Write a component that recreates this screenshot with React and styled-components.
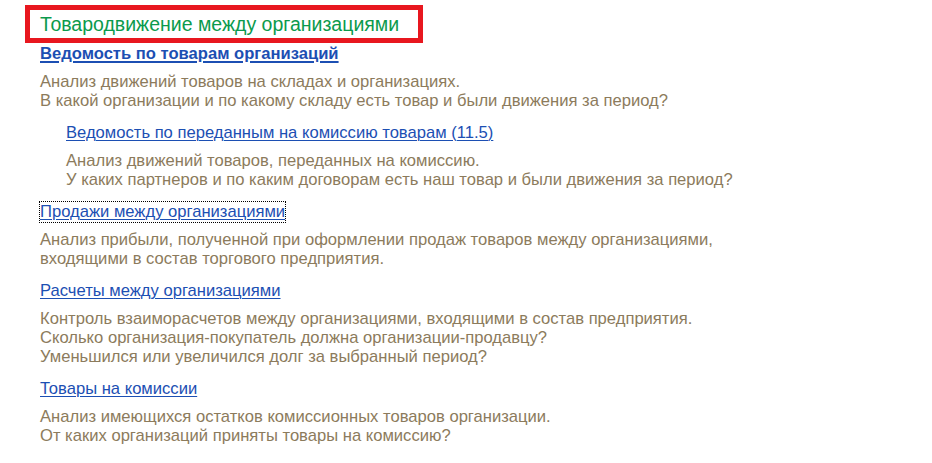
import React from 'react';
import styled, { createGlobalStyle } from 'styled-components';

const GlobalStyle = createGlobalStyle`
  body {
    margin: 0;
    background: #ffffff;
    font-family: Arial, "Liberation Sans", sans-serif;
  }
`;

const sections = [
  {
    title: 'Ведомость по товарам организаций',
    bold: true,
    lines: [
      'Анализ движений товаров на складах и организациях.',
      'В какой организации и по какому складу есть товар и были движения за период?',
    ],
  },
  {
    title: 'Ведомость по переданным на комиссию товарам (11.5)',
    indent: true,
    lines: [
      'Анализ движений товаров, переданных на комиссию.',
      'У каких партнеров и по каким договорам есть наш товар и были движения за период?',
    ],
  },
  {
    title: 'Продажи между организациями',
    focused: true,
    lines: [
      'Анализ прибыли, полученной при оформлении продаж товаров между организациями,',
      'входящими в состав торгового предприятия.',
    ],
  },
  {
    title: 'Расчеты между организациями',
    lines: [
      'Контроль взаиморасчетов между организациями, входящими в состав предприятия.',
      'Сколько организация-покупатель должна организации-продавцу?',
      'Уменьшился или увеличился долг за выбранный период?',
    ],
  },
  {
    title: 'Товары на комиссии',
    lines: [
      'Анализ имеющихся остатков комиссионных товаров организации.',
      'От каких организаций приняты товары на комиссию?',
    ],
  },
];

export default function App() {
  return (
    <Page>
      <GlobalStyle />
      <HeaderBox>
        <HeaderTitle>Товародвижение между организациями</HeaderTitle>
      </HeaderBox>
      <List>
        {sections.map(s => (
          <Section key={s.title} $indent={s.indent}>
            <ReportLink href="#" $bold={s.bold} $focused={s.focused} onClick={e => e.preventDefault()}>
              {s.title}
            </ReportLink>
            <Description>
              {s.lines.map(l => (
                <div key={l}>{l}</div>
              ))}
            </Description>
          </Section>
        ))}
      </List>
    </Page>
  );
}

const Page = styled.div`
  width: 932px;
  height: 463px;
  padding: 5px 0 0 25px;
  box-sizing: border-box;
  overflow: hidden;
`;

const HeaderBox = styled.div`
  width: 398px;
  height: 38px;
  box-sizing: border-box;
  border: 5px solid #e8171f;
  padding-left: 10px;
  display: flex;
  align-items: center;
`;

const HeaderTitle = styled.span`
  font-size: 19.5px;
  color: #0b9a4c;
  white-space: nowrap;
`;

const List = styled.div`
  display: flex;
  flex-direction: column;
  padding-left: 15px;
`;

const Section = styled.div`
  display: flex;
  flex-direction: column;
  align-items: flex-start;
  padding-left: ${({ $indent }) => ($indent ? '26px' : '0')};
  margin-bottom: 13px;
  &:first-child {
    margin-top: 1px;
  }
`;

const ReportLink = styled.a`
  font-size: 16.6px;
  line-height: 20px;
  color: #1c4fb3;
  font-weight: ${({ $bold }) => ($bold ? 700 : 400)};
  text-decoration: underline;
  text-decoration-thickness: ${({ $bold }) => ($bold ? '2px' : '1px')};
  text-underline-offset: 2px;
  outline: ${({ $focused }) => ($focused ? '1px dotted #000' : 'none')};
  outline-offset: 0;
`;

const Description = styled.div`
  margin-top: 8px;
  font-size: 16.6px;
  line-height: 19px;
  color: #8c7b5c;
`;
